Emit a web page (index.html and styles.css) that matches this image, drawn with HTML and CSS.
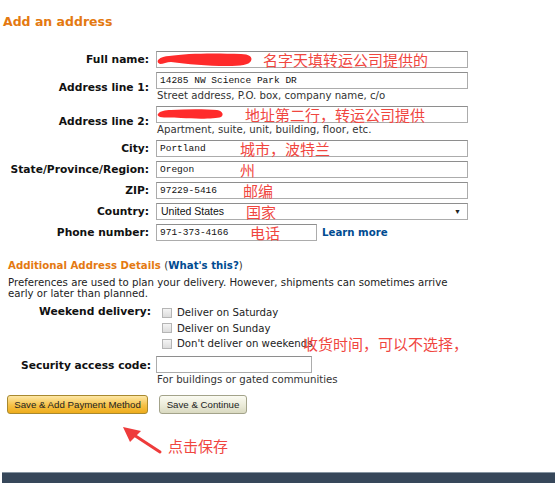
FILE: index.html
```html
<!DOCTYPE html>
<html lang="en">
<head>
  <meta charset="UTF-8" />
  <meta name="viewport" content="width=device-width, initial-scale=1.0" />
  <title>Add an address</title>
  <link rel="stylesheet" href="styles.css">
</head>
<body>

  <div class="page">
    <h1 class="title">Add an address</h1>

    <table class="addr">
      <tr>
        <th>Full name:</th>
        <td>
          <div class="field">
            <input class="box" type="text" value="" />
            <svg class="smudge" width="96" height="16" viewBox="0 0 96 16">
              <path d="M1 8 C4 5 8 4 12 4 C30 1 60 1 84 2 C92 2 96 5 94 9 C92 13 84 14 70 14 C50 14 30 12 14 10 C10 10 6 12 3 12 C1 11 0 10 1 8 Z" fill="#ff2b2b" />
            </svg>
            <span class="note note-name">名字天填转运公司提供的</span>
          </div>
        </td>
      </tr>
      <tr>
        <th>Address line 1:</th>
        <td>
          <input class="box" type="text" value="14285 NW Science Park DR" />
          <div class="tip">Street address, P.O. box, company name, c/o</div>
        </td>
      </tr>
      <tr>
        <th>Address line 2:</th>
        <td>
          <div class="field">
            <input class="box" type="text" value="" />
            <svg class="smudge" width="68" height="14" viewBox="0 0 68 14">
              <path d="M1 7 C3 4 8 3 14 3 C30 2 48 2 60 3 C66 4 67 8 64 10 C58 12 40 12 24 11 C14 10 8 11 3 10 C1 9 0 8 1 7 Z" fill="#ff2b2b" />
            </svg>
            <span class="note note-addr">地址第二行，转运公司提供</span>
          </div>
          <div class="tip">Apartment, suite, unit, building, floor, etc.</div>
        </td>
      </tr>
      <tr>
        <th>City:</th>
        <td>
          <div class="field">
            <input class="box" type="text" value="Portland" />
            <span class="note note-city">城市，波特兰</span>
          </div>
        </td>
      </tr>
      <tr>
        <th>State/Province/Region:</th>
        <td>
          <div class="field">
            <input class="box" type="text" value="Oregon" />
            <span class="note note-city">州</span>
          </div>
        </td>
      </tr>
      <tr>
        <th>ZIP:</th>
        <td>
          <div class="field">
            <input class="box" type="text" value="97229-5416" />
            <span class="note note-zip">邮编</span>
          </div>
        </td>
      </tr>
      <tr>
        <th>Country:</th>
        <td>
          <div class="field">
            <div class="box select">
              <span>United States</span>
              <span class="caret">▼</span>
            </div>
            <span class="note note-country">国家</span>
          </div>
        </td>
      </tr>
      <tr>
        <th>Phone number:</th>
        <td>
          <div class="phone-row">
            <div class="field field-short">
              <input class="box box-short" type="text" value="971-373-4166" />
              <span class="note note-phone">电话</span>
            </div>
            <a href="#" class="link">Learn more</a>
          </div>
        </td>
      </tr>
    </table>

    <div class="extra">
      <h2 class="extra-title">Additional Address Details <span class="paren">(<a href="#" class="link">What's this?</a>)</span></h2>
      <p class="extra-text">Preferences are used to plan your delivery. However, shipments can sometimes arrive early or later than planned.</p>
    </div>

    <table class="prefs">
      <tr>
        <th class="top">Weekend delivery:</th>
        <td>
          <label class="check"><input type="checkbox" /> Deliver on Saturday</label>
          <label class="check"><input type="checkbox" /> Deliver on Sunday</label>
          <label class="check"><input type="checkbox" /> Don't deliver on weekends<span class="note note-weekend">收货时间，可以不选择，</span></label>
        </td>
      </tr>
      <tr>
        <th class="top code-label">Security access code:</th>
        <td class="code-cell">
          <input class="box box-code" type="text" value="" />
          <div class="tip">For buildings or gated communities</div>
        </td>
      </tr>
    </table>

    <div class="actions">
      <button class="btn btn-primary">Save &amp; Add Payment Method</button>
      <button class="btn btn-plain">Save &amp; Continue</button>
    </div>

    <div class="callout">
      <svg class="arrow" width="50" height="32" viewBox="0 0 50 32">
        <polygon points="5,4 23,8 12,19" fill="#ee3b3b" />
        <line x1="16" y1="12" x2="42" y2="29" stroke="#ee3b3b" stroke-width="3" stroke-linecap="round" />
      </svg>
      <span class="callout-text">点击保存</span>
    </div>
  </div>

  <div class="footer-bar"></div>

</body>
</html>
```

FILE: styles.css
```css
body {
  margin: 0;
  font-family: "DejaVu Sans", Verdana, sans-serif;
  font-size: 10.2px;
  color: #111;
  background: #fff;
}
.page {
  padding-top: 14px;
}
.title {
  margin: 0 0 19px 3px;
  font-size: 12.5px;
  line-height: 16px;
  color: #e47911;
  font-weight: bold;
}
.addr, .prefs {
  border-collapse: collapse;
}
.addr th, .prefs th {
  width: 149px;
  padding: 2px 7px 2px 0;
  text-align: right;
  vertical-align: middle;
  font-size: 10.7px;
  font-weight: bold;
  white-space: nowrap;
}
.addr td, .prefs td {
  padding: 2px 0;
  vertical-align: middle;
}
.field {
  position: relative;
  width: 312px;
}
.field-short {
  width: 161px;
}
.box {
  display: block;
  box-sizing: border-box;
  width: 312px;
  height: 17px;
  margin: 0;
  padding: 0 3px;
  border: 1px solid #acacac;
  border-top-color: #8e8e8e;
  background: #fff;
  font-family: "Liberation Mono", monospace;
  font-size: 9.5px;
  line-height: 15px;
  color: #111;
  outline: none;
}
.box-short {
  width: 161px;
}
.box-code {
  width: 156px;
}
.select {
  display: flex;
  justify-content: space-between;
  align-items: center;
  padding: 0 6px 0 4px;
  font-family: "Liberation Sans", Arial, sans-serif;
  font-size: 10.5px;
}
.caret {
  font-size: 7px;
  color: #222;
}
.tip {
  font-size: 10.2px;
  line-height: 13px;
  color: #333;
  padding-left: 1px;
}
.smudge {
  position: absolute;
  left: 1px;
  top: 1px;
}
.note {
  position: absolute;
  top: 0;
  font-family: "Noto Sans CJK SC", sans-serif;
  font-size: 15px;
  line-height: 17px;
  color: #f0463f;
  white-space: nowrap;
}
.note-name { left: 107px; }
.note-addr { left: 89px; }
.note-city { left: 84px; }
.note-zip { left: 87px; }
.note-country { left: 90px; }
.note-phone { left: 94px; }
.phone-row {
  display: flex;
  align-items: center;
  gap: 5px;
}
.link {
  color: #004b91;
  font-weight: bold;
  text-decoration: none;
}
.extra {
  padding-left: 8px;
  margin-top: 16px;
}
.extra-title {
  margin: 0 0 5px;
  font-size: 10.2px;
  line-height: 13px;
  color: #e47911;
  font-weight: bold;
}
.paren {
  color: #333;
  font-weight: normal;
}
.extra-text {
  margin: 0 0 4px;
  width: 460px;
  line-height: 11px;
  color: #222;
}
.prefs th {
  width: 151px;
  padding-right: 5px;
}
.prefs th.top {
  vertical-align: top;
}
.check {
  display: flex;
  align-items: center;
  gap: 5px;
  height: 15.5px;
  padding-left: 6px;
  color: #222;
  position: relative;
}
.check input {
  appearance: none;
  -webkit-appearance: none;
  width: 10px;
  height: 10px;
  margin: 0;
  border: 1px solid #b5b5b5;
  background: linear-gradient(#f4f4f4, #dcdcdc);
  box-sizing: border-box;
}
.note-weekend {
  left: 147px;
  top: -1px;
}
.code-cell {
  padding-top: 6px;
}
.prefs th.code-label {
  padding-top: 5px;
}
.actions {
  display: flex;
  gap: 11px;
  padding: 7px 0 0 7px;
}
.btn {
  height: 19px;
  padding: 0;
  border-radius: 3px;
  font-family: "Liberation Sans", Arial, sans-serif;
  font-size: 9.7px;
  color: #222;
  cursor: pointer;
}
.btn-primary {
  width: 141px;
  border: 1px solid #a8892f;
  background: linear-gradient(#fde7a6, #f5c146 55%, #eeac1c);
}
.btn-plain {
  width: 88px;
  border: 1px solid #a3a38a;
  background: linear-gradient(#fbfbf2, #e9e9d6 60%, #d9d9c0);
}
.callout {
  display: flex;
  align-items: flex-end;
  margin: 8px 0 0 118px;
  height: 33px;
}
.callout-text {
  font-family: "Noto Sans CJK SC", sans-serif;
  font-size: 15px;
  line-height: 18px;
  color: #f0463f;
}
.footer-bar {
  margin: 17px 3px 0 2px;
  height: 12px;
  background: #37475a;
  border-top: 1px solid #8795a2;
}
```
